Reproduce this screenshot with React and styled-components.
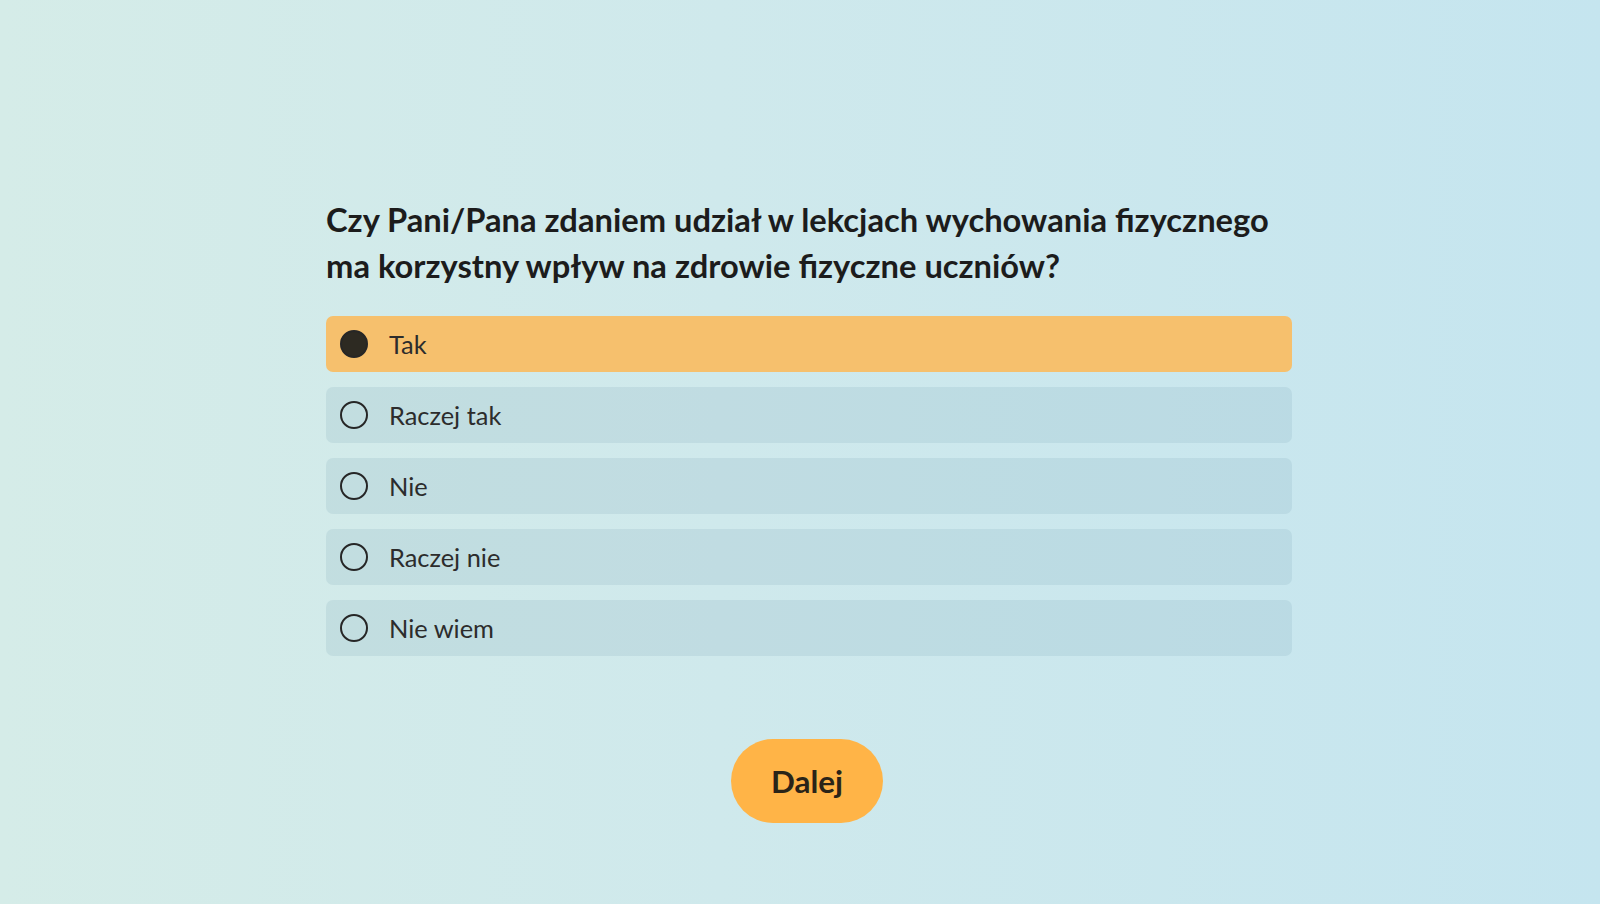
import React, { useState } from "react";
import styled, { createGlobalStyle } from "styled-components";

const GlobalStyle = createGlobalStyle`
  html, body { margin: 0; padding: 0; }
  body {
    font-family: Lato, "Noto Sans", sans-serif;
    background: linear-gradient(90deg, #d5ece8 0%, #cfe9ec 45%, #c5e5ef 100%);
    min-height: 100vh;
  }
`;

const Page = styled.main`
  min-height: 100vh;
  box-sizing: border-box;
  display: flex;
  justify-content: center;
  padding: 197px 0 0 18px;
`;

const Survey = styled.section`
  width: 966px;
  display: flex;
  flex-direction: column;
`;

const Question = styled.h1`
  margin: 0 0 27px;
  font-size: 32.7px;
  line-height: 46px;
  font-weight: 700;
  color: #1c1c1c;
  font-variant-ligatures: common-ligatures;
`;

const Options = styled.div`
  display: flex;
  flex-direction: column;
  gap: 15px;
`;

const Option = styled.label`
  display: flex;
  align-items: center;
  gap: 21px;
  height: 56px;
  padding: 0 14px;
  border-radius: 7px;
  background: ${(p) => (p.$selected ? "#f6c06d" : "rgba(120, 160, 175, 0.17)")};
  cursor: pointer;
  font-size: 25.4px;
  color: #2c2c2c;
`;

const Radio = styled.span`
  width: 28px;
  height: 28px;
  box-sizing: border-box;
  border-radius: 50%;
  border: 2.5px solid #262626;
  background: ${(p) => (p.$selected ? "#2d2a22" : "transparent")};
  flex: none;
`;

const Footer = styled.div`
  display: flex;
  justify-content: center;
  padding: 83px 4px 0 0;
`;

const NextButton = styled.button`
  width: 152px;
  height: 84px;
  border: none;
  border-radius: 42px;
  background: #ffb447;
  font-family: Lato, "Noto Sans", sans-serif;
  font-weight: 700;
  font-size: 31.4px;
  color: #2a2418;
  cursor: pointer;
`;

const answers = ["Tak", "Raczej tak", "Nie", "Raczej nie", "Nie wiem"];

export default function App() {
  const [selected, setSelected] = useState(0);
  return (
    <>
      <GlobalStyle />
      <Page>
        <Survey>
          <Question>
            Czy Pani/Pana zdaniem udział w lekcjach wychowania fizycznego
            <br />
            ma korzystny wpływ na zdrowie fizyczne uczniów?
          </Question>
          <Options>
            {answers.map((a, i) => (
              <Option key={a} $selected={i === selected} onClick={() => setSelected(i)}>
                <Radio $selected={i === selected} />
                {a}
              </Option>
            ))}
          </Options>
          <Footer>
            <NextButton>Dalej</NextButton>
          </Footer>
        </Survey>
      </Page>
    </>
  );
}
